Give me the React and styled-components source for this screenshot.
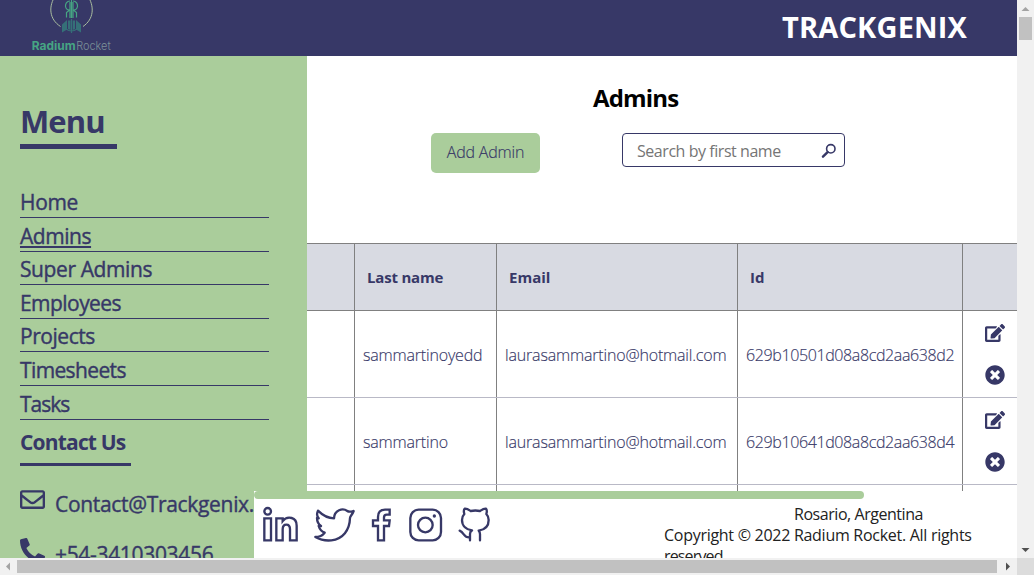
import React from 'react';
import styled, { createGlobalStyle } from 'styled-components';
import { FaEdit, FaTimesCircle, FaRegEnvelope, FaPhoneAlt } from 'react-icons/fa';

const navy = '#373867';
const green = '#aacd9b';

const GlobalStyle = createGlobalStyle`
  *, *::before, *::after { box-sizing: border-box; }
  body { margin: 0; font-family: "Segoe UI", "Open Sans", "Noto Sans", sans-serif; }
`;

const Window = styled.div`
  display: grid;
  grid-template: 558px 17px / 1017px 17px;
  width: 1034px;
  height: 575px;
  overflow: hidden;
  background: #fff;
`;

const Viewport = styled.div`
  position: relative;
  overflow: hidden;
`;

const Header = styled.header`
  display: flex;
  justify-content: space-between;
  height: 56px;
  padding: 0 50px 0 31px;
  background: ${navy};
`;

const Logo = styled.div`
  width: 84px;
  height: 56px;
`;

const Brand = styled.h1`
  margin: 0;
  color: #fff;
  font-size: 29px;
  font-weight: 700;
  line-height: 54px;
  letter-spacing: 0.15px;
  white-space: nowrap;
`;

const Body = styled.div`
  display: flex;
  height: 502px;
`;

const Sidebar = styled.aside`
  flex: 0 0 307px;
  padding: 45px 0 0 20px;
  background: ${green};
  color: ${navy};
`;

const MenuTitle = styled.h2`
  width: 97px;
  height: 48px;
  margin: 0;
  border-bottom: 5px solid ${navy};
  font-size: 31px;
  line-height: 41px;
  letter-spacing: -0.9px;
`;

const Nav = styled.nav`
  width: 249px;
  margin-top: 35.4px;
`;

const NavItem = styled.div`
  height: 33.6px;
  padding-top: 2.6px;
  border-bottom: 1px solid ${navy};
  font-size: 21px;
  font-weight: 500;
  line-height: 30.6px;
  -webkit-text-stroke: 0.4px ${navy};
`;

const NavLink = styled.a`
  letter-spacing: ${(p) => p.$spacing}px;
  text-decoration: ${(p) => (p.$active ? 'underline' : 'none')};
  text-decoration-thickness: 2px;
  text-underline-offset: 2px;
  text-decoration-skip-ink: none;
`;

const ContactTitle = styled.h3`
  width: 111px;
  height: 40px;
  margin: 6.4px 0 22px;
  border-bottom: 3px solid ${navy};
  font-size: 21px;
  line-height: 32.5px;
  letter-spacing: -0.82px;
`;

const ContactRow = styled.div`
  display: flex;
  gap: 10px;
  height: 49px;
  font-size: 21px;
  font-weight: 500;
  line-height: ${(p) => p.$line}px;
  letter-spacing: -0.32px;
  white-space: nowrap;
  -webkit-text-stroke: 0.4px ${navy};

  svg { flex: none; margin-top: ${(p) => p.$iconTop}px; }
`;

const Content = styled.main`
  flex: 1;
  min-width: 0;
  padding-top: 26px;
`;

const Title = styled.h2`
  margin: 0 0 19px 286px;
  font-size: 24px;
  line-height: 32px;
  letter-spacing: -0.85px;
`;

const Toolbar = styled.div`
  display: flex;
  align-items: flex-start;
  gap: 82px;
  height: 110px;
  padding-left: 124px;
`;

const AddButton = styled.button`
  width: 109px;
  height: 40px;
  padding: 0 0 2px;
  border: 0;
  border-radius: 5px;
  background: ${green};
  color: ${navy};
  font: 300 16px "Segoe UI", "Open Sans", sans-serif;
  letter-spacing: -0.2px;
  -webkit-text-stroke: 0.15px ${navy};
`;

const Search = styled.div`
  display: flex;
  align-items: center;
  justify-content: space-between;
  width: 223px;
  height: 34px;
  padding: 1px 7px 0 14px;
  border: 1px solid ${navy};
  border-radius: 4px;
  color: #757575;
  font-size: 16px;
  letter-spacing: -0.45px;
`;

const TableRow = styled.div`
  display: grid;
  grid-template-columns: 48px 142px 241px 225px 1fr;
  height: 87px;
  border-bottom: 1px solid #b9b9c6;
  color: ${navy};
`;

const TableHead = styled(TableRow)`
  height: 68px;
  border-top: 1px solid #808080;
  border-bottom-color: #808080;
  background: #d8dae2;
`;

const Cell = styled.div`
  display: flex;
  align-items: center;
  padding: 1px 0 0 8px;
  border-right: 1px solid #808080;
  font-size: 16px;
  font-weight: 300;
  letter-spacing: ${(p) => p.$spacing || 0}px;
  white-space: nowrap;
  -webkit-text-stroke: 0.15px ${navy};
`;

const HeadCell = styled(Cell)`
  padding: 0 0 0 12px;
  font-size: 15px;
  font-weight: 700;
  -webkit-text-stroke: 0;
`;

const Actions = styled.div`
  display: flex;
  flex-direction: column;
  gap: 22px;
  padding: 12px 0 0 22px;
`;

const Footer = styled.footer`
  position: absolute;
  left: 254px;
  right: 0;
  top: 491px;
  bottom: 0;
  overflow: hidden;
  background: #fff;
`;

const Progress = styled.div`
  width: 610px;
  height: 8px;
  border-radius: 4px;
  background: ${green};
`;

const FooterBody = styled.div`
  display: flex;
  justify-content: space-between;
`;

const Socials = styled.div`
  display: flex;
  gap: 13.6px;
  padding: 6px 0 0 7px;
`;

const Legal = styled.div`
  width: 353px;
  padding-top: 5px;
  color: #222;
  font-size: 16px;
  line-height: 21px;
  white-space: nowrap;
`;

const LegalLine = styled.div`
  padding-left: ${(p) => p.$indent || 0}px;
  letter-spacing: ${(p) => p.$spacing}px;
`;

const VScroll = styled.div`
  display: flex;
  flex-direction: column;
  align-items: center;
  justify-content: space-between;
  background: #f1f1f1;

  svg { display: block; }
`;

const VThumb = styled.div`
  width: 13px;
  height: 23px;
  margin: 0 auto;
  background: #c1c1c1;
`;

const HScroll = styled.div`
  display: flex;
  align-items: center;
  background: #f1f1f1;
`;

const HThumb = styled.div`
  width: 980px;
  height: 13px;
  background: #c1c1c1;
`;

const Corner = styled.div`
  background: #dcdcdc;
`;

const Arrow = ({ d, color = '#505050' }) => (
  <svg width="17" height="17" viewBox="0 0 17 17"><path d={d} fill={color} /></svg>
);

const Social = ({ x, w, children }) => (
  <svg width={w} height="40" viewBox={`${x} 76 ${w * 3} 120`} fill="none" stroke={navy} strokeWidth="7" strokeLinejoin="round" strokeLinecap="round">
    {children}
  </svg>
);

const LogoName = styled.text`
  font-family: Inter, sans-serif;
  font-size: 12.2px;
`;

const LogoMark = () => (
  <svg width="84" height="56" viewBox="31 0 84 56" fill="none">
    <path d="M54 -2C49 7 49 19 60.500 26.500M89 -2C94 7 94 19 83 26.500" stroke="#a9bd9f" strokeWidth="1" />
    <path d="M66.500 17.500V12.500L69 10.500M76.500 17.500V12.500L74 10.500M70 18V2M73 18V2M71.500 18V0M70 1C66.500 1 65.300 4 65.500 6.500C66 9 68 10.200 70 10M73 1C76.500 1 77.700 4 77.500 6.500C77 9 75 10.200 73 10" stroke="#46a583" strokeWidth="1.2" />
    <path d="M62 32.500V24.500L67 20V29.500ZM81 32.500V24.500L76 20V29.500ZM68 20.500H70.500V30L68 29ZM72.700 20.500H75V29L72.700 30Z" fill="#357078" />
    <path d="M71.500 19V33M66 29Q71.500 33 77 29" stroke="#357078" strokeWidth="1.2" />
    <LogoName x="31.800" y="50" fill="#46a583" fontWeight="700" textLength="43.800" lengthAdjust="spacingAndGlyphs">Radium</LogoName>
    <LogoName x="76.200" y="50" fill="#7c9197" fontWeight="300" textLength="34.500" lengthAdjust="spacingAndGlyphs">Rocket</LogoName>
  </svg>
);

const links = [
  ['Home', -0.35], ['Admins', -0.45], ['Super Admins', -0.4], ['Employees', -0.55],
  ['Projects', -0.45], ['Timesheets', -0.62], ['Tasks', -1],
];

const admins = [
  { last: 'sammartinoyedd', email: 'laurasammartino@hotmail.com', id: '629b10501d08a8cd2aa638d2' },
  { last: 'sammartino', email: 'laurasammartino@hotmail.com', id: '629b10641d08a8cd2aa638d4' },
  { last: '', email: '', id: '' },
];

export default function App() {
  return (
    <Window>
      <GlobalStyle />
      <Viewport>
        <Header>
          <Logo><LogoMark /></Logo>
          <Brand>TRACKGENIX</Brand>
        </Header>
        <Body>
          <Sidebar>
            <MenuTitle>Menu</MenuTitle>
            <Nav>
              {links.map(([name, spacing]) => (
                <NavItem key={name}>
                  <NavLink $spacing={spacing} $active={name === 'Admins'}>{name}</NavLink>
                </NavItem>
              ))}
            </Nav>
            <ContactTitle>Contact Us</ContactTitle>
            <ContactRow $line={33} $iconTop={-1}><FaRegEnvelope size={25} />Contact@Trackgenix.</ContactRow>
            <ContactRow $line={35} $iconTop={1}><FaPhoneAlt size={25} />+54-3410303456</ContactRow>
          </Sidebar>
          <Content>
            <Title>Admins</Title>
            <Toolbar>
              <AddButton>Add Admin</AddButton>
              <Search>
                Search by first name
                <svg width="16" height="16" viewBox="0 0 16 16" fill="none" stroke={navy}>
                  <circle cx="9.800" cy="5.800" r="4.200" strokeWidth="1.600" />
                  <path d="M6.600 9.200L2 13.600" strokeWidth="2.500" strokeLinecap="round" />
                </svg>
              </Search>
            </Toolbar>
            <TableHead>
              <HeadCell />
              <HeadCell $spacing={-0.2}>Last name</HeadCell>
              <HeadCell>Email</HeadCell>
              <HeadCell>Id</HeadCell>
            </TableHead>
            {admins.map((a, i) => (
              <TableRow key={i}>
                <Cell />
                <Cell $spacing={-0.18}>{a.last}</Cell>
                <Cell $spacing={-0.17}>{a.email}</Cell>
                <Cell $spacing={-0.38}>{a.id}</Cell>
                <Actions>
                  <FaEdit size={20} />
                  <FaTimesCircle size={20} />
                </Actions>
              </TableRow>
            ))}
          </Content>
        </Body>
        <Footer>
          <Progress />
          <FooterBody>
            <Socials>
              <Social x={33} w={38}>
                <circle cx="53" cy="95" r="10" />
                <path d="M43 116H63V182H43ZM79 116H98V124C105 115 117 113 125 115C136 118 140 127 140 138V182H120V149C120 130 98 130 98 149V182H79Z" strokeLinejoin="miter" />
              </Social>
              <Social x={189} w={43}>
                <path d="M310 94C301 97 297 98 292 94C278 84 253 91 252 116C234 116 220 109 204 93C199 103 201 110 206 116L201 115C201 126 204 133 213 139L206 139C209 149 214 155 224 159C217 168 209 172 196 172C210 180 224 184 244 182C279 178 299 151 300 115C300 110 307 105 311 94Z" />
              </Social>
              <Social x={360} w={25}>
                <path d="M422 90V105H413C406 105 405 109 405 113V122H422L420 139H405V182H387V139H372V122H387V112C387 98 395 90 408 90Z" strokeLinejoin="miter" />
              </Social>
              <Social x={473} w={36}>
                <rect x="480" y="90" width="92" height="92" rx="25" />
                <circle cx="525" cy="136" r="22" />
                <circle cx="552" cy="109" r="5" fill={navy} stroke="none" />
              </Social>
              <Social x={622} w={34}>
                <path d="M661 182V163C661 158 663 154 667 152C650 150 637 139 637 121C637 112 640 107 644 103C642 97 642 91 645 87C652 86 657 90 663 94C672 92 682 92 691 94C697 90 702 86 709 87C712 91 712 97 710 103C714 107 717 112 717 121C717 139 706 150 687 153C690 156 691 160 691 164V182M661 173C642 176 645 159 630 153" />
              </Social>
            </Socials>
            <Legal>
              <LegalLine $indent={130} $spacing={-0.45}>Rosario, Argentina</LegalLine>
              <LegalLine $spacing={-0.28}>Copyright © 2022 Radium Rocket. All rights</LegalLine>
              <LegalLine $spacing={-0.85}>reserved.</LegalLine>
            </Legal>
          </FooterBody>
        </Footer>
      </Viewport>
      <VScroll>
        <div>
          <Arrow d="M4.500 11L8.500 7L12.500 11Z" color="#a3a3a3" />
          <VThumb />
        </div>
        <Arrow d="M4.500 7L8.500 11L12.500 7Z" />
      </VScroll>
      <HScroll>
        <Arrow d="M10 4.500L6 8.500L10 12.500Z" color="#a3a3a3" />
        <HThumb />
        <Arrow d="M9 4.500L13 8.500L9 12.500Z" />
      </HScroll>
      <Corner />
    </Window>
  );
}
